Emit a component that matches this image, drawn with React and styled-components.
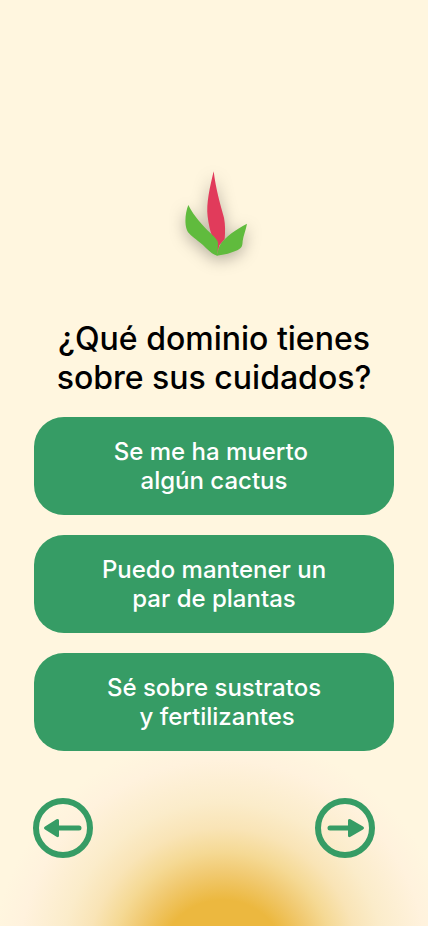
import React from "react";
import styled, { createGlobalStyle } from "styled-components";

const GlobalStyle = createGlobalStyle`
  * { box-sizing: border-box; }
  body { margin: 0; background: #fff6df; }
`;

const green = "#369c65";

const Page = styled.main`
  min-height: 100vh;
  padding: 160px 34px 68px;
  display: flex;
  flex-direction: column;
  font-family: Inter, "Liberation Sans", sans-serif;
  font-weight: 500;
  background: radial-gradient(
    circle at 52% calc(100% + 38px),
    #ecb83f 64px,
    #f1ca72 92px,
    #f5d994 112px,
    #f9e4b6 136px,
    #fbecca 162px,
    #fff2dd 204px,
    #fff6df 230px
  );
`;

const Logo = styled.svg`
  width: 100px;
  height: 120px;
  align-self: center;
  overflow: visible;
  filter: drop-shadow(0 4px 8px rgba(0, 0, 0, 0.3));
`;

const Title = styled.h1`
  margin: 39px 0 20px;
  font-size: 32px;
  line-height: 39px;
  font-weight: 500;
  text-align: center;
  white-space: pre-line;
  color: #000;
`;

const Options = styled.div`
  display: grid;
  gap: 20px;
`;

const Option = styled.button`
  min-height: 98px;
  padding: 20px;
  border: 0;
  border-radius: 30px;
  background: ${green};
  color: #fff;
  font: inherit;
  font-size: 24px;
  line-height: 29px;
  text-align: center;
  white-space: pre-wrap;
  cursor: pointer;
`;

const Navigation = styled.nav`
  display: flex;
  justify-content: space-between;
  margin: 47px 19px 0 -1px;
`;

const RoundButton = styled.button`
  display: grid;
  place-items: center;
  width: 60px;
  height: 60px;
  padding: 0;
  border: 6px solid ${green};
  border-radius: 50%;
  background: transparent;
  color: ${green};
  cursor: pointer;
`;

const Arrow = styled.svg`
  width: 48px;
  height: 48px;
`;

const options = [
  "Se me ha muerto \nalgún cactus",
  "Puedo mantener un\npar de plantas",
  "Sé sobre sustratos\n y fertilizantes",
];

function PlantLogo() {
  return (
    <Logo viewBox="0 0 300 360" aria-hidden="true">
      <path
        fill="#e13b5b"
        d="M149 34C138 80 126 130 131 170C134 194 138 211 144 228L159 246L160 283L166 256L182 238C184 214 184 194 180 173C168 130 156 90 149 34Z"
      />
      <path
        fill="#60bb3d"
        d="M73 135C92 172 114 194 140 220C154 234 162 241 162 250L160 287C150 284 139 277 125 263C103 241 88 235 75 220C60 205 62 161 73 135Z"
      />
      <path
        fill="#60bb3d"
        d="M249 191C215 208 183 232 170 252C164 262 162 272 158 287C182 285 202 279 220 271C236 262 235 256 236 243C238 228 246 209 249 191Z"
      />
    </Logo>
  );
}

export default function App() {
  return (
    <>
      <GlobalStyle />
      <Page>
        <PlantLogo />
        <Title>{"¿Qué dominio tienes\nsobre sus cuidados?"}</Title>
        <Options>
          {options.map((text) => (
            <Option key={text} type="button">{text}</Option>
          ))}
        </Options>
        <Navigation>
          <RoundButton type="button" aria-label="Anterior">
            <Arrow viewBox="0 0 48 48" fill="currentColor" aria-hidden="true">
              <path d="M6 22.5L17.5 15.3Q20 14.2 20 16.5V21.5H40A2.5 2.5 0 0 1 40 26.5H20V31.5Q20 34 17.5 32.8L6 25.5Q4 24 6 22.5Z" />
            </Arrow>
          </RoundButton>
          <RoundButton type="button" aria-label="Siguiente">
            <Arrow viewBox="0 0 48 48" fill="currentColor" aria-hidden="true">
              <path d="M42 22.5L29.5 15.3Q27 14.2 27 16.5V21.5H9A2.5 2.5 0 0 0 9 26.5H27V31.5Q27 34 29.5 32.8L42 25.5Q44 24 42 22.5Z" />
            </Arrow>
          </RoundButton>
        </Navigation>
      </Page>
    </>
  );
}
